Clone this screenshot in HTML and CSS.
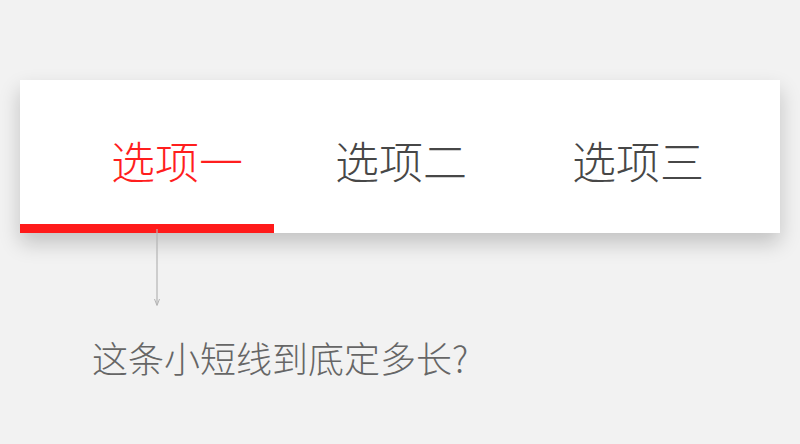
FILE: index.html
```html
<!DOCTYPE html>
<html lang="zh">
<head>
<meta charset="utf-8">
<link rel="stylesheet" href="styles.css">
</head>
<body>
<div class="page">
  <div class="card">
    <div class="tabs">
      <span class="tab tab-active">选项一</span>
      <span class="tab tab-2">选项二</span>
      <span class="tab tab-3">选项三</span>
    </div>
    <div class="indicator"></div>
  </div>
  <div class="annot">
    <svg class="arrow" width="10" height="78" viewBox="0 0 10 78">
      <line x1="5" y1="0" x2="5" y2="76" stroke="#b4b4b4" stroke-width="1.2"/>
      <polyline points="2.5,70 5,76.5 7.5,70" fill="none" stroke="#b4b4b4" stroke-width="1"/>
    </svg>
  </div>
  <p class="caption">这条小短线到底定多长?</p>
</div>
</body>
</html>
```
FILE: styles.css
```css
html, body {
  margin: 0;
  padding: 0;
  background: #f2f2f2;
}
body {
  font-family: "Noto Sans CJK SC", "Noto Sans", sans-serif;
  width: 800px;
  height: 444px;
  overflow: hidden;
}
.page {
  padding-top: 80px;
}
.card {
  margin-left: 20px;
  width: 760px;
  height: 153px;
  background: #fff;
  box-shadow: 0 10px 20px rgba(0, 0, 0, 0.2);
  display: flex;
  flex-direction: column;
}
.tabs {
  flex: 1;
  display: flex;
  align-items: center;
  padding-left: 91px;
  padding-top: 15px;
}
.tab {
  font-size: 44px;
  font-weight: 300;
  line-height: 1;
  color: #474747;
}
.tab-active {
  color: #ff1e1e;
}
.tab-2 {
  margin-left: 92px;
}
.tab-3 {
  margin-left: 105px;
}
.indicator {
  width: 254px;
  height: 9px;
  background: #ff1a1a;
}
.annot {
  margin-left: 132px;
  height: 78px;
  margin-top: -4px;
}
.arrow {
  display: block;
  margin-left: 20px;
}
.caption {
  margin: 32px 0 0 92px;
  font-size: 36px;
  font-weight: 300;
  line-height: 1;
  color: #666;
}
```
